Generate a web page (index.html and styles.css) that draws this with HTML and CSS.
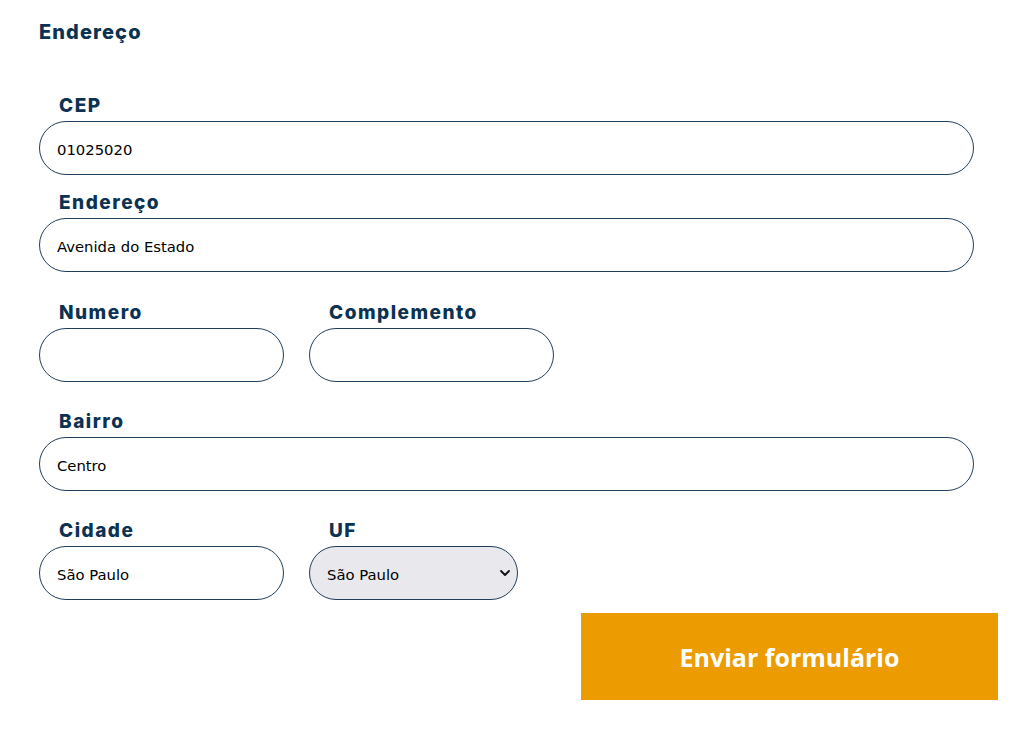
FILE: index.html
```html
<!DOCTYPE html>
<html lang="pt-BR">
<head>
<meta charset="utf-8">
<title>Endereço</title>
<link rel="stylesheet" href="styles.css">
</head>
<body>
<form class="form">
  <h2 class="section-title">Endereço</h2>
  <div class="group first">
    <div class="field full">
      <label class="label" for="cep">CEP</label>
      <input class="input" id="cep" type="text" value="01025020">
    </div>
    <div class="field full tight">
      <label class="label" for="end">Endereço</label>
      <input class="input" id="end" type="text" value="Avenida do Estado">
    </div>
  </div>
  <div class="row row-wide">
    <div class="field small">
      <label class="label" for="num">Numero</label>
      <input class="input" id="num" type="text" value="">
    </div>
    <div class="field small">
      <label class="label" for="comp">Complemento</label>
      <input class="input" id="comp" type="text" value="">
    </div>
  </div>
  <div class="row">
    <div class="field full">
      <label class="label" for="bairro">Bairro</label>
      <input class="input" id="bairro" type="text" value="Centro">
    </div>
  </div>
  <div class="row">
    <div class="field small">
      <label class="label" for="cidade">Cidade</label>
      <input class="input" id="cidade" type="text" value="São Paulo">
    </div>
    <div class="field uf">
      <label class="label" for="uf">UF</label>
      <div class="select-wrap">
        <select class="select" id="uf">
          <option>São Paulo</option>
        </select>
        <svg class="chev" width="12" height="8" viewBox="0 0 12 8"><path d="M2 2 L6 6 L10 2" fill="none" stroke="#111" stroke-width="1.8" stroke-linecap="round" stroke-linejoin="round"/></svg>
      </div>
    </div>
  </div>
  <div class="actions">
    <button class="submit" type="button">Enviar formulário</button>
  </div>
</form>
</body>
</html>
```
FILE: styles.css
```css
* { box-sizing: border-box; }
body {
  margin: 0;
  background: #fff;
  font-family: "DejaVu Sans", sans-serif;
}
.form {
  padding: 18px 35px 0 39px;
  width: 1033px;
}
.section-title {
  margin: 0;
  font-family: "Inter", sans-serif;
  font-weight: 800;
  font-size: 20px;
  line-height: 28px;
  color: #0b3153;
  letter-spacing: 1.1px;
}
.group.first { margin-top: 47px; }
.field { display: flex; flex-direction: column; }
.field.tight { margin-top: 15px; }
.row { display: flex; gap: 25px; margin-top: 27px; }
.row.row-wide { margin-top: 28px; }
.full { width: 935px; }
.small { width: 245px; }
.uf { width: 209px; }
.label {
  font-family: "Inter", sans-serif;
  font-weight: 800;
  font-size: 19px;
  line-height: 24px;
  padding-top: 1px;
  color: #0b3153;
  padding-left: 20px;
  margin-bottom: 3px;
  letter-spacing: 1.5px;
}
.input, .select {
  height: 54px;
  border: 1px solid #1f3f5d;
  border-radius: 27px;
  padding: 2px 16px 0 17px;
  font-family: "DejaVu Sans", sans-serif;
  font-size: 14.8px;
  color: #000;
  background: #fff;
  outline: none;
  width: 100%;
}
.select-wrap { position: relative; }
.select {
  appearance: none;
  -webkit-appearance: none;
  background: #e9e9ed;
}
.chev {
  position: absolute;
  right: 7px;
  top: 23px;
  pointer-events: none;
}
.actions {
  display: flex;
  justify-content: flex-end;
  margin-top: 13px;
}
.submit {
  width: 417px;
  height: 87px;
  background: #ec9c00;
  border: none;
  color: #fff;
  font-family: "Open Sans", sans-serif;
  font-weight: 700;
  font-size: 25px;
  cursor: pointer;
}
```
